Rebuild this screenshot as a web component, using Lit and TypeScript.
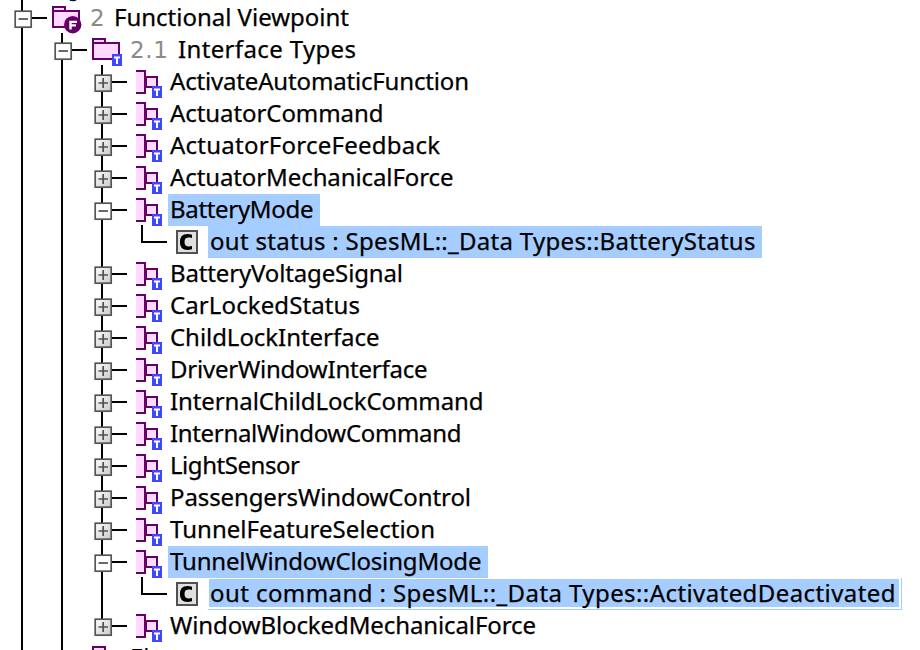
import { LitElement, html, css, svg, nothing } from "lit";
import { customElement, property } from "lit/decorators.js";

type Kind = "pkg-f" | "pkg-t" | "iface" | "flow";
type Row = { depth: number; kind: Kind; text: string; width: number; num?: string; open?: boolean; selected?: boolean; focused?: boolean; boxWidth?: number };

const iface = (text: string, width: number, extra: Partial<Row> = {}): Row => ({ depth: 2, kind: "iface", text, width, ...extra });

const ROWS: Row[] = [
  { depth: 0, kind: "pkg-f", num: "2", text: "Functional Viewpoint", width: 235, open: true },
  { depth: 1, kind: "pkg-t", num: "2.1", text: "Interface Types", width: 178, open: true },
  iface("ActivateAutomaticFunction", 299),
  iface("ActuatorCommand", 213.5),
  iface("ActuatorForceFeedback", 270),
  iface("ActuatorMechanicalForce", 283.5),
  iface("BatteryMode", 143.5, { open: true, selected: true, boxWidth: 152 }),
  { depth: 3, kind: "flow", text: "out status : SpesML::_Data Types::BatteryStatus", width: 545.5, selected: true, boxWidth: 554 },
  iface("BatteryVoltageSignal", 233),
  iface("CarLockedStatus", 190),
  iface("ChildLockInterface", 209.5),
  iface("DriverWindowInterface", 257.5),
  iface("InternalChildLockCommand", 313.5),
  iface("InternalWindowCommand", 291.5),
  iface("LightSensor", 130),
  iface("PassengersWindowControl", 301),
  iface("TunnelFeatureSelection", 265),
  iface("TunnelWindowClosingMode", 311.5, { open: true, selected: true, boxWidth: 320 }),
  { depth: 3, kind: "flow", text: "out command : SpesML::_Data Types::ActivatedDeactivated", width: 685.5, selected: true, focused: true, boxWidth: 694 },
  iface("WindowBlockedMechanicalForce", 366),
];

const badgeT = (x: number, y: number) => svg`
  <rect x=${x} y=${y} width="10" height="12" fill="#4048ff"/>
  <path d="M${x + 2} ${y + 3.5}h6M${x + 5} ${y + 2.5}v7.500" stroke="#fff" stroke-width="2"/>`;

const folder = svg`
  <path d="M1 21V1H13V5H27V21ZM1 5H13" fill="#ffd9ff" stroke="#660066" stroke-width="2"/>`;

const ICONS = {
  "pkg-f": svg`${folder}<circle cx="20.700" cy="18.700" r="8.700" fill="#660066"/>
    <path d="M18.500 23.500V15.900H25M18.500 19.400H24" fill="none" stroke="#fff" stroke-width="2.400"/>`,
  "pkg-t": svg`${folder}${badgeT(20, 16)}`,
  iface: svg`<path d="M10 7H21V17H10Z" fill="#ffd9ff" stroke="#660066" stroke-width="2"/>
    <rect x="0" y="0" width="10" height="24" fill="#ffd9ff"/>
    <path d="M0 1H9V23H0" fill="none" stroke="#660066" stroke-width="2"/>${badgeT(16, 16)}`,
  flow: svg`<rect x="1" y="1" width="20" height="22" fill="#e0e0e0" stroke="#505050" stroke-width="2"/>
    <path d="M16 4.700V8C11 6.700 8.500 8 8.500 12S11 17.300 16 16V19.300C8 21.300 4 18.500 4 12S8 2.700 16 4.700Z" fill="#000"/>`,
};

@customElement("tree-row")
class TreeRow extends LitElement {
  @property({ attribute: false }) row!: Row;

  static styles = css`
    :host { display: flex; height: 32px; align-items: stretch; }
    .lead { display: block; flex: none; overflow: visible; }
    .icon { display: block; flex: none; overflow: visible; }
    .label { display: block; flex: none; height: 32px; box-sizing: border-box; }
    .selected { background: #a5cdff; }
    .focused {
      padding: 1px 2px 2px 1px;
      border: solid #a5cdff;
      border-width: 0 1px 1px 0;
      background-clip: content-box;
    }
    .text { display: block; overflow: visible; font: 24px "Noto Sans", "Open Sans", sans-serif; fill: #000; stroke: #000; stroke-width: 0.25px; }
    .num { font: 23px "DejaVu Sans", sans-serif; fill: #8a8a8a; stroke: none; }
  `;

  render() {
    const r = this.row;
    const flow = r.kind === "flow";
    const pkg = r.kind.startsWith("pkg");
    const boxX = 15 + r.depth * 40;
    const leadWidth = flow ? 176 : pkg ? 52 + r.depth * 40 : 136;
    const numWidth = r.num === "2" ? 14.6 : 38;
    const textX = r.num === "2" ? 24 : r.num ? 48 : 2;
    const shift = r.focused ? -1 : 0;
    return html`
      <svg class="lead" width=${leadWidth} height="32">
        ${flow
          ? svg`<path d="M142 -1V16H167" fill="none" stroke="#000" stroke-width="2"/>`
          : svg`<path d="M${boxX + 17} 16H${boxX + 32}" stroke="#000" stroke-width="2"/>
            <defs><linearGradient id="g" x1="0" y1="0" x2="1" y2="1"><stop offset="0" stop-color="#fff"/><stop offset="1" stop-color="#c8c8c8"/></linearGradient></defs>
            <rect x=${boxX + 0.2} y="9.200" width="16" height="16" fill=${r.open ? "#fff" : "url(#g)"} stroke="#555" stroke-width="1.700"/>
            <path d="M${boxX + 3.5} 17H${boxX + 13}${r.open ? "" : `M${boxX + 8.2} 12V22`}" stroke="#505050" stroke-width="1.700"/>`}
      </svg>
      <svg class="icon" width=${pkg ? 38 : 32} height="32"><g transform="translate(0 4)">${ICONS[r.kind]}</g></svg>
      <div class="label ${r.selected ? "selected" : ""} ${r.focused ? "focused" : ""}" style=${r.boxWidth ? `width:${r.boxWidth}px` : ""}>
        <svg class="text" width=${textX + r.width} height="28">
          ${r.num ? svg`<text class="num" x="0" y="24" textLength=${numWidth}>${r.num}</text>` : nothing}
          <text x=${textX + shift} y=${24 + shift} textLength=${r.width}>${r.text}</text>
        </svg>
      </div>`;
  }
}

@customElement("app-root")
class AppRoot extends LitElement {
  static styles = css`
    :host { display: block; position: relative; width: 920px; height: 650px; overflow: hidden; background: #fff; }
    .guides { position: absolute; inset: 0; }
    .tree { position: relative; padding-top: 2px; }
    .next { display: block; margin-left: 92px; font: 24px "Noto Sans", sans-serif; overflow: visible; }
  `;

  render() {
    return html`
      <svg class="guides" width="920" height="650">
        <path d="M22 0V650M62 33V650M102 65V626" stroke="#000" stroke-width="2"/>
        <ellipse cx="73" cy="-1" rx="4" ry="2.200" fill="#001830"/>
      </svg>
      <div class="tree">
        ${ROWS.map((row) => html`<tree-row .row=${row}></tree-row>`)}
        <svg class="next" width="100" height="32">
          <g transform="translate(0 4)">${folder}</g>
          <text x="38" y="24">El</text>
        </svg>
      </div>`;
  }
}
